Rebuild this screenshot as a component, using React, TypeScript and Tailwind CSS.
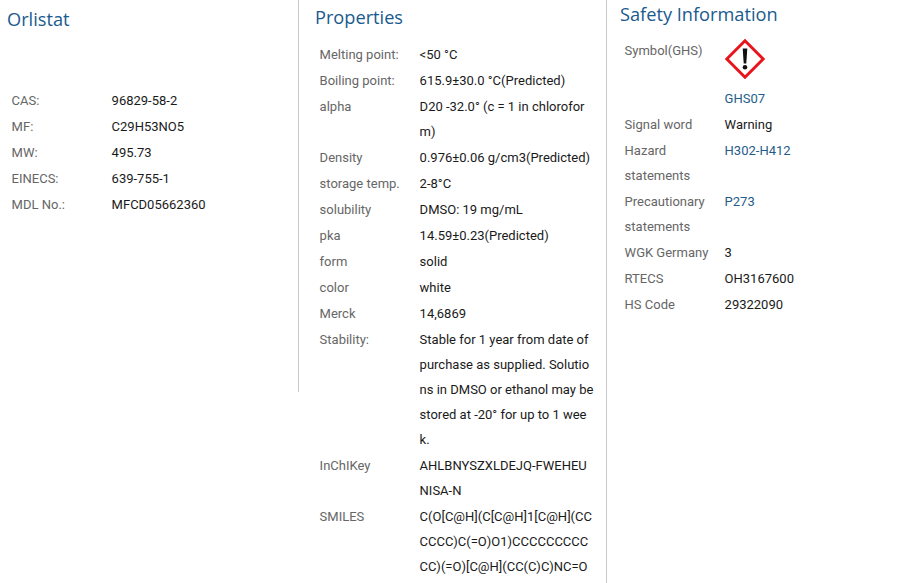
const LINK = "text-[#1f5c8b]";

interface Row {
  label: string;
  value: React.ReactNode;
  link?: boolean;
}

const BASIC: Row[] = [
  { label: "CAS:", value: "96829-58-2" },
  { label: "MF:", value: "C29H53NO5" },
  { label: "MW:", value: "495.73" },
  { label: "EINECS:", value: "639-755-1" },
  { label: "MDL No.:", value: "MFCD05662360" },
];

const PROPERTIES: Row[] = [
  { label: "Melting point:", value: "<50 °C" },
  { label: "Boiling point:", value: "615.9±30.0 °C(Predicted)" },
  { label: "alpha", value: "D20 -32.0° (c = 1 in chloroform)" },
  { label: "Density", value: "0.976±0.06 g/cm3(Predicted)" },
  { label: "storage temp.", value: "2-8°C" },
  { label: "solubility", value: "DMSO: 19 mg/mL" },
  { label: "pka", value: "14.59±0.23(Predicted)" },
  { label: "form", value: "solid" },
  { label: "color", value: "white" },
  { label: "Merck", value: "14,6869" },
  {
    label: "Stability:",
    value: "Stable for 1 year from date of purchase as supplied. Solutions in DMSO or ethanol may be stored at -20° for up to 1 week.",
  },
  { label: "InChIKey", value: "AHLBNYSZXLDEJQ-FWEHEUNISA-N" },
  { label: "SMILES", value: "C(O[C@H](C[C@H]1[C@H](CCCCCC)C(=O)O1)CCCCCCCCCCC)(=O)[C@H](CC(C)C)NC=O" },
];

const SAFETY: Row[] = [
  { label: "Signal word", value: "Warning" },
  { label: "Hazard statements", value: "H302-H412", link: true },
  { label: "Precautionary statements", value: "P273", link: true },
  { label: "WGK Germany", value: "3" },
  { label: "RTECS", value: "OH3167600" },
  { label: "HS Code", value: "29322090" },
];

function GhsIcon() {
  return (
    <svg width="40" height="40" viewBox="0 0 40 40" className="mt-[1px]" aria-hidden>
      <path d="M20 1.8 38.2 20 20 38.2 1.8 20Z" fill="#fff" stroke="#e8141c" strokeWidth="3" />
      <path d="M17.7 9.5h4.6l-1 15h-2.6Z" fill="#111" />
      <circle cx="20" cy="28.2" r="2.3" fill="#111" />
    </svg>
  );
}

function InfoRow({ row, valueWidth }: { row: Row; valueWidth: string }) {
  return (
    <div className="flex leading-[25px] mb-px">
      <div className="w-[100px] shrink-0 text-[#666] pr-2">{row.label}</div>
      <div className={`${valueWidth} break-all ${row.link ? LINK : "text-[#1a1a1a]"}`}>{row.value}</div>
    </div>
  );
}

function Heading({ children }: { children: React.ReactNode }) {
  return (
    <h2 className="text-[18.2px] leading-[26px] text-[#1a5a8e] font-['Open_Sans','Noto_Sans',sans-serif]">
      {children}
    </h2>
  );
}

export default function App() {
  return (
    <div className="flex h-[583px] w-[915px] overflow-hidden bg-white text-[13px] font-['Roboto','Liberation_Sans',sans-serif]">
      <section className="h-[392px] w-[299px] shrink-0 border-r border-[#c8c8c8] pl-[7px] pt-[6px]">
        <Heading>Orlistat</Heading>
        <div className="mt-[56px] pl-[4.6px]">
          {BASIC.map((row) => (
            <InfoRow key={row.label} row={row} valueWidth="w-[180px]" />
          ))}
        </div>
      </section>

      <section className="h-full w-[308px] shrink-0 border-r border-[#c8c8c8] pl-[16px] pt-[4px]">
        <Heading>Properties</Heading>
        <div className="mt-[12px] pl-[4.6px]">
          {PROPERTIES.map((row) => (
            <InfoRow key={row.label} row={row} valueWidth="w-[176px]" />
          ))}
        </div>
      </section>

      <section className="flex-1 pl-[13px] pt-[1px]">
        <Heading>Safety Information</Heading>
        <div className="mt-[11px] pl-[4.6px]">
          <div className="flex leading-[25px] mb-px">
            <div className="w-[100px] shrink-0 text-[#666]">Symbol(GHS)</div>
            <div className={LINK}>
              <GhsIcon />
              <div className="mt-[7px]">GHS07</div>
            </div>
          </div>
          {SAFETY.map((row) => (
            <InfoRow key={row.label} row={row} valueWidth="w-[176px]" />
          ))}
        </div>
      </section>
    </div>
  );
}
